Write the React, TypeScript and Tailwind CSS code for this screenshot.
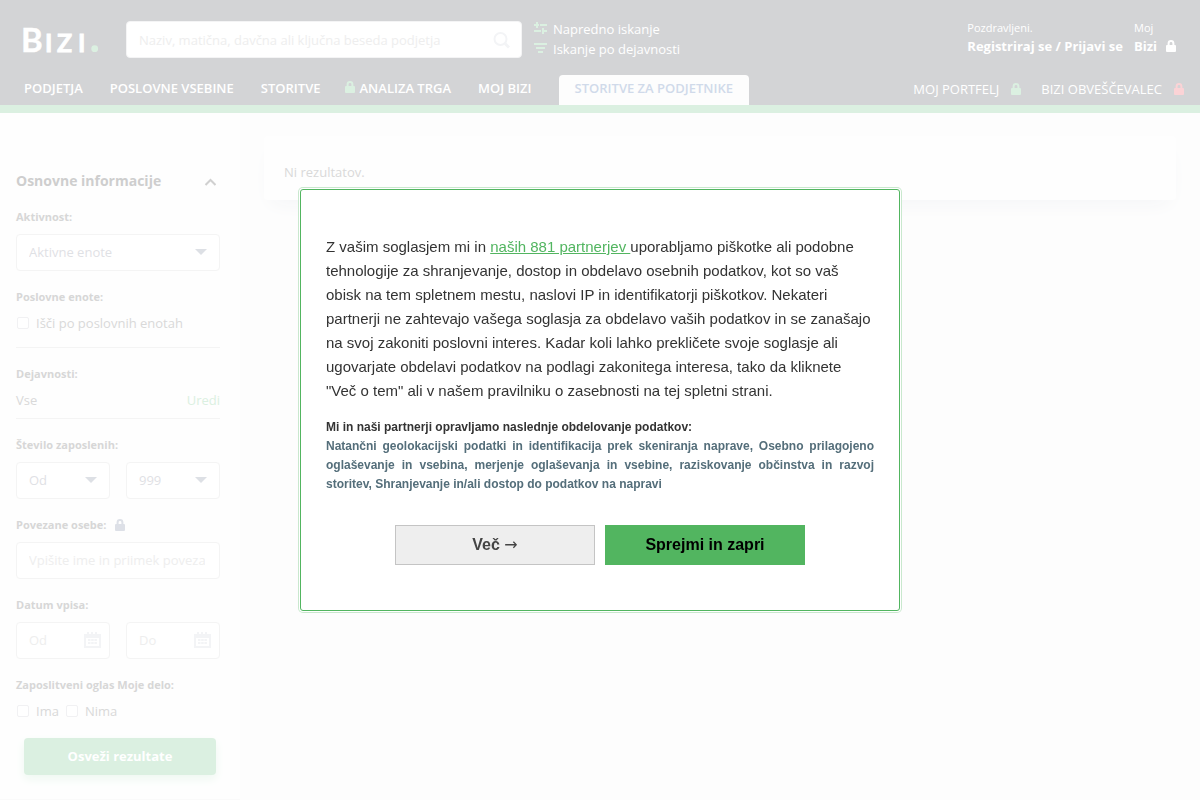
import type { ReactNode } from 'react';

const LOCK_PATH = 'M1.6 5V3.4a3.4 3.4 0 0 1 6.8 0V5H9a1 1 0 0 1 1 1v5a1 1 0 0 1-1 1H1a1 1 0 0 1-1-1V6a1 1 0 0 1 1-1h.6Zm2 0h2.8V3.4a1.4 1.4 0 0 0-2.8 0V5Z';

function Lock({ className }: { className: string }) {
  return (
    <svg viewBox="0 0 10 12" className={`h-3 w-[10px] shrink-0 ${className}`} fill="currentColor" aria-hidden="true">
      <path fillRule="evenodd" d={LOCK_PATH} />
    </svg>
  );
}

function Logo() {
  return (
    <svg viewBox="-4 -12 84 48" className="h-12 w-[84px]" role="img" aria-label="Bizi">
      <g fill="#fff" fontFamily="Lato, sans-serif" fontWeight="700">
        <text x="-3" y="26" fontSize="33" stroke="#fff" strokeWidth="0.4">B</text>
        <g fontSize="25" stroke="#fff" strokeWidth="0.8">
          <text x="21" y="26">I</text>
          <text x="33" y="26">Z</text>
          <text x="54" y="26">I</text>
        </g>
      </g>
      <circle cx="70.7" cy="22.7" r="3.4" fill="#dbf0e1" />
    </svg>
  );
}

function Calendar() {
  return (
    <svg viewBox="0 0 17 17" className="pointer-events-none absolute right-[9px] top-[10px] h-[17px] w-[17px] text-[#f3f4f6]" aria-hidden="true">
      <path
        fill="currentColor"
        fillRule="evenodd"
        d="M0 2h3V0h2v2h2V0h2v2h2V0h2v2h4v14H0V2Zm2 4v8h13V6H2Z"
      />
      <path fill="currentColor" d="M4 7h2.5v2H4V7Zm3.2 0h2.5v2H7.2V7Zm3.2 0h2.5v2h-2.5V7ZM4 10h2.5v2H4v-2Zm3.2 0h2.5v2H7.2v-2Zm3.2 0h2.5v2h-2.5v-2Z" />
    </svg>
  );
}

function Group({ label, htmlFor, children, icon }: { label: string; htmlFor?: string; children: ReactNode; icon?: ReactNode }) {
  return (
    <div className="flex flex-col gap-[9px]">
      <div className="flex h-4 items-center gap-[9px] text-[11px] font-bold leading-4 text-[#d7d7d7]">
        {htmlFor ? <label htmlFor={htmlFor}>{label}</label> : <span>{label}</span>}
        {icon}
      </div>
      {children}
    </div>
  );
}

const FIELD = 'h-[37px] w-full min-w-0 rounded border border-[#f4f4f4] bg-white pl-3 text-[13px]';

function Select({ id, label, value }: { id: string; label: string; value: string }) {
  return (
    <div className="relative min-w-0 flex-1">
      <select id={id} aria-label={label} className={`${FIELD} appearance-none pr-8 text-[#dfe1e5]`}>
        <option>{value}</option>
      </select>
      <svg viewBox="0 0 12 6" className="pointer-events-none absolute right-[13px] top-[15px] h-[6px] w-3" aria-hidden="true">
        <path d="M0 0h12L6 6Z" fill="#dde0e5" />
      </svg>
    </div>
  );
}

function Check({ label }: { label: string }) {
  return (
    <label className="flex h-[18px] items-center gap-[7px] pl-px text-[13px] leading-5 text-[#d9d9d9]">
      <input type="checkbox" className="h-3 w-3 appearance-none rounded-[2px] border border-[#f1f1f3] bg-white" />
      {label}
    </label>
  );
}

function DateField({ label }: { label: string }) {
  return (
    <div className="relative min-w-0 flex-1">
      <input aria-label={`Datum vpisa ${label}`} placeholder={label} className={`${FIELD} pb-px pr-8 placeholder:text-[#eeeeee]`} />
      <Calendar />
    </div>
  );
}

function Header() {
  return (
    <header className="flex h-[113px] flex-col justify-between border-b-8 border-[#dbf0e1] bg-[#d3d4d6] text-[13px] text-white">
      <div className="flex h-[70px] items-start px-6 pt-[21px]">
        <a href="#" className="-ml-1 -mt-[7px] w-[106px] shrink-0"><Logo /></a>
        <div className="relative w-[396px]">
          <input
            aria-label="Iskanje"
            placeholder="Naziv, matična, davčna ali ključna beseda podjetja"
            className="h-[37px] w-full rounded border border-[#f4f4f5] bg-white pl-3 pr-10 text-[13px] placeholder:text-[#eeeeee]"
          />
          <button aria-label="Išči" className="absolute right-3 top-[11px]">
            <svg viewBox="0 0 17 17" className="h-[17px] w-[17px]" fill="none" stroke="#f3f4f6" strokeWidth="2" aria-hidden="true">
              <circle cx="7.5" cy="7" r="6" />
              <path d="m12 11.5 4 4" strokeWidth="3" />
            </svg>
          </button>
        </div>
        <div className="ml-3 flex flex-col">
          <a href="#" className="flex h-5 items-start gap-[6px] leading-4">
            <svg viewBox="0 0 13 12" className="mt-[1px] h-3 w-[13px]" fill="#dbf0e1" aria-hidden="true">
              <path d="M0 2h2V0h2v2h1v2H4v2H2V4H0V2Zm6 0h7v2H6V2ZM0 8h7v2H0V8Zm8-2h2v2h3v2h-3v2H8V6Z" />
            </svg>
            Napredno iskanje
          </a>
          <a href="#" className="flex h-5 items-start gap-[6px] leading-4">
            <svg viewBox="0 0 13 12" className="mt-[1px] h-3 w-[13px]" fill="#dbf0e1" aria-hidden="true">
              <path d="M0 1h13v2H0V1Zm2 4h9v2H2V5Zm2 4h5v2H4V9Z" />
            </svg>
            Iskanje po dejavnosti
          </a>
        </div>
        <div className="ml-auto flex gap-[11px] leading-[18px]">
          <a href="#" className="-mt-[2px] flex flex-col">
            <span className="text-[11px]">Pozdravljeni.</span>
            <span className="font-bold">Registriraj se / Prijavi se</span>
          </a>
          <a href="#" className="-mt-[2px] flex flex-col">
            <span className="text-[11px]">Moj</span>
            <span className="flex items-center gap-[9px] font-bold">Bizi <Lock className="text-white" /></span>
          </a>
        </div>
      </div>
      <nav className="flex h-[30px] items-start pl-6 pr-4">
        <div className="flex items-start gap-[27px] font-semibold leading-[26px]">
          <a href="#">PODJETJA</a>
          <a href="#">POSLOVNE VSEBINE</a>
          <a href="#">STORITVE</a>
          <a href="#" className="-ml-[3px] flex gap-[5px]"><Lock className="mt-[6px] text-[#dbf0e1]" />ANALIZA TRGA</a>
          <a href="#">MOJ BIZI</a>
          <a href="#" className="h-[30px] rounded-t bg-[#fdfdfd] px-4 text-[#d0daea]">STORITVE ZA PODJETNIKE</a>
        </div>
        <div className="ml-auto flex items-center gap-5 leading-7">
          <a href="#" className="flex items-center gap-3">MOJ PORTFELJ<Lock className="text-[#dbf0e1]" /></a>
          <a href="#" className="flex items-center gap-3">BIZI OBVEŠČEVALEC<Lock className="text-[#fbd3d6]" /></a>
        </div>
      </nav>
    </header>
  );
}

function Sidebar() {
  return (
    <aside className="w-60 shrink-0 border-b border-[#fafafa] bg-[#fefefe] px-4 pb-6 pr-5 pt-[57px]">
      <form className="flex flex-col gap-[18px]" onSubmit={(e) => e.preventDefault()}>
        <div className="mb-px flex h-5 items-center justify-between pr-1">
          <h2 className="text-[14px] font-bold text-[#cecece]">Osnovne informacije</h2>
          <button type="button" aria-label="Skrij">
            <svg viewBox="0 0 12 8" className="mt-1 h-2 w-3" fill="none" stroke="#d0d0d0" strokeWidth="2" aria-hidden="true">
              <path d="m1.5 7 5-5 5 5" />
            </svg>
          </button>
        </div>
        <Group label="Aktivnost:" htmlFor="aktivnost"><Select id="aktivnost" label="Aktivnost" value="Aktivne enote" /></Group>
        <div className="border-b border-[#f4f4f4] pb-[15px]">
          <Group label="Poslovne enote:"><Check label="Išči po poslovnih enotah" /></Group>
        </div>
        <div className="border-b border-[#f4f4f4] pb-[9px]">
          <Group label="Dejavnosti:">
            <div className="flex h-[18px] items-center justify-between text-[13px] leading-5 text-[#d9d9d9]">
              <span>Vse</span>
              <a href="#" className="text-[#dbf0e1]">Uredi</a>
            </div>
          </Group>
        </div>
        <Group label="Število zaposlenih:" htmlFor="od">
          <div className="flex gap-4">
            <Select id="od" label="Število zaposlenih od" value="Od" />
            <Select id="do" label="Število zaposlenih do" value="999" />
          </div>
        </Group>
        <Group label="Povezane osebe:" htmlFor="osebe" icon={<Lock className="text-[#dde0e7]" />}>
          <input id="osebe" placeholder="Vpišite ime in priimek povezane osebe" className={`${FIELD} pb-px pr-[14px] placeholder:text-[#eeeeee]`} />
        </Group>
        <Group label="Datum vpisa:">
          <div className="flex gap-4"><DateField label="Od" /><DateField label="Do" /></div>
        </Group>
        <Group label="Zaposlitveni oglas Moje delo:">
          <div className="flex gap-[6px]"><Check label="Ima" /><Check label="Nima" /></div>
        </Group>
        <button className="ml-2 mr-1 h-[37px] rounded bg-[#dbf0e1] text-[13px] font-bold text-white shadow-[0_4px_10px_#eef8f1]">
          Osveži rezultate
        </button>
      </form>
    </aside>
  );
}

function ConsentDialog() {
  return (
    <div className="fixed inset-0 flex items-center justify-center font-['Liberation_Sans',Arial,sans-serif]">
      <section
        role="dialog"
        aria-label="Soglasje za piškotke"
        className="w-[600px] rounded-[3px] border border-[#52b560] bg-white px-[25px] py-[45px] shadow-[0_0_0_1px_#fff,0_0_0_2px_#c9e8ce]"
      >
        <p className="text-[15px] leading-6 text-[#333]">
          Z vašim soglasjem mi in <a href="#" className="text-[#52b560] underline">naših 881 partnerjev </a>uporabljamo piškotke ali podobne tehnologije za shranjevanje, dostop in obdelavo osebnih podatkov, kot so vaš obisk na tem spletnem mestu, naslovi IP in identifikatorji piškotkov. Nekateri partnerji ne zahtevajo vašega soglasja za obdelavo vaših podatkov in se zanašajo na svoj zakoniti poslovni interes. Kadar koli lahko prekličete svoje soglasje ali ugovarjate obdelavi podatkov na podlagi zakonitega interesa, tako da kliknete "Več o tem" ali v našem pravilniku o zasebnosti na tej spletni strani.
        </p>
        <h3 className="mt-[14px] text-[12px] font-bold leading-5 text-[#333]">Mi in naši partnerji opravljamo naslednje obdelovanje podatkov:</h3>
        <p className="text-justify text-[12px] font-bold leading-[19px] text-[#546e7a]">
          Natančni geolokacijski podatki in identifikacija prek skeniranja naprave, Osebno prilagojeno oglaševanje in vsebina, merjenje oglaševanja in vsebine, raziskovanje občinstva in razvoj storitev, Shranjevanje in/ali dostop do podatkov na napravi
        </p>
        <div className="mt-[31px] flex justify-center gap-[10px] text-[16px] font-bold">
          <button className="h-10 w-[200px] border border-[#c4c4c4] bg-[#eee] text-[#444]">Več <span className="font-['DejaVu_Sans'] font-normal">→</span></button>
          <button className="h-10 w-[200px] bg-[#52b560] text-black">Sprejmi in zapri</button>
        </div>
      </section>
    </div>
  );
}

export default function App() {
  return (
    <div className="min-h-screen bg-[#fdfdfd] font-['Open_Sans',sans-serif]">
      <Header />
      <div className="flex items-start">
        <Sidebar />
        <main className="min-w-0 flex-1 p-6 pt-[23px]">
          <div className="rounded bg-[#fefefe] px-5 pb-[18px] pt-[26px] text-[13px] leading-5 text-[#d9d9d9] shadow-[0_10px_20px_-8px_#f3f4f6]">
            <p>Ni rezultatov.</p>
          </div>
        </main>
      </div>
      <ConsentDialog />
    </div>
  );
}
